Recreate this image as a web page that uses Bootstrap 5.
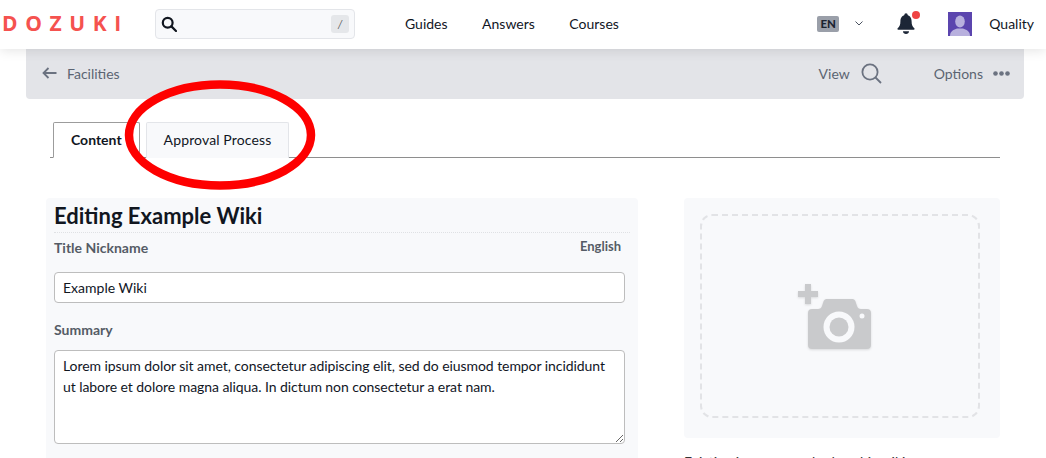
<!DOCTYPE html>
<html lang="en"><head><meta charset="utf-8"><title>Dozuki</title>
<link href="https://cdn.jsdelivr.net/npm/bootstrap@5.3.0/dist/css/bootstrap.min.css" rel="stylesheet">
<style>
html,body{height:458px;overflow:hidden}
body{font-family:Lato,"Liberation Sans",sans-serif;font-size:14px;color:#11161f;background:#fff;position:relative}
.top-bar{height:49px;background:#fff;box-shadow:0 1px 12px rgba(0,0,0,.12);position:relative;z-index:2;padding:0 0 2px 2px}
.brand-word{font-family:"Open Sans","Liberation Sans",sans-serif;font-weight:700;font-size:21px;letter-spacing:7.6px;color:#f5524f;width:153px;line-height:1}
.search-box{width:200px;height:30px;background:#f8f9fb;border:1px solid #e3e5e9;border-radius:4px;padding:0 5px}
.slash-key{width:18px;height:18px;background:#e5e7ea;border-radius:3px;font-size:11px;color:#555;text-align:center;line-height:18px;font-style:italic}
.main-links{margin-left:50px;gap:34.5px;font-size:14px}
.lang-tag{width:22px;height:16px;background:#9a9fa9;border-radius:2px;font-size:11.5px;font-weight:900;color:#1c2430;text-align:center;line-height:16px}
.bell-wrap{position:relative;width:22px;height:24px}
.bell-dot{position:absolute;right:-3px;top:-1px;width:8px;height:8px;border-radius:50%;background:#ef4444}
.person-pic{width:24px;height:24px;display:block}
.sub-bar{margin:0 22px 0 26px;height:50px;background:#e3e4e8;border-radius:0 0 4px 4px;padding:0 14px 2px 16px;color:#5b6472;font-size:14px}
.tab-row{margin:23px 46px 0 50px;height:36px;border-bottom:1px solid #8e8e8e;padding-left:3px;gap:6px}
.tab-on,.tab-off{height:36px;padding:0 17px;line-height:34px;font-size:14px;border-radius:2px 2px 0 0}
.tab-on{font-weight:700;background:#fff;border:1px solid #9c9c9c;border-bottom-color:#fff}
.tab-off{background:#f8f9fb;border:1px solid #e3e5e9;border-bottom:0;letter-spacing:.13px}
.body-wrap{margin:40px 46px 0 46px;gap:46px}
.edit-panel{width:592px;height:270px;background:#f8f9fb;border-radius:4px;padding:0 8px;flex:none}
.edit-title{font-size:22px;font-weight:700;line-height:33px;padding-top:1px;margin:0;border-bottom:1px dotted #dfe1e4}
.field-label{font-weight:700;color:#555c66;font-size:14px}
.lang-name{font-size:13px;margin-top:-1px}
.edit-panel .form-control{border-color:#bdbdbd;border-radius:4px;font-size:14px;color:#11161f;padding:0 8px;box-shadow:none}
.name-input{height:31px;width:571px;margin-top:16px}
.sum-input{height:94px;width:571px;margin-top:12px;padding-top:4px!important;line-height:21px;resize:vertical;letter-spacing:-.065px}
.sum-label{margin-top:18px;line-height:17px}
.title-row{padding:6px 9px 0 0;line-height:17px}
.side-col{width:316px;flex:none}
.drop-panel{height:240px;background:#f8f9fb;border-radius:4px;padding:16px 20px 20px 16px}
.drop-inner{height:100%;border:2px dashed #e2e3e6;border-radius:12px}
.cam-icon{margin-right:11px;filter:drop-shadow(0 1px 1px rgba(0,0,0,.12))}
.side-note{margin-top:15px;font-size:14px;line-height:17px;color:#333}
.ring-mark{position:absolute;left:120px;top:76px;z-index:5;pointer-events:none}
.lang-chev{margin-left:16px}
.bell-wrap{margin-left:32px}
.person-pic{margin-left:31px}
.user-name{margin:0 12px 0 17px}
.back-label{margin-left:10px}
.view-glass{margin-left:11px}
.opt-label{margin-left:52px}
.opt-dots{margin-left:10px}
</style></head><body>
<header class="top-bar d-flex align-items-center">
  <div class="brand-word">DOZUKI</div>
  <div class="search-box d-flex align-items-center justify-content-between">
    <svg width="16" height="16" viewBox="0 0 16 16" fill="none" stroke="#11161f" stroke-width="2.2"><circle cx="6.7" cy="6.7" r="4.9"/><path d="M10.4 10.4 15 15" stroke-linecap="round"/></svg>
    <span class="slash-key">/</span>
  </div>
  <nav class="main-links d-flex"><span>Guides</span><span>Answers</span><span>Courses</span></nav>
  <div class="d-flex align-items-center ms-auto">
    <span class="lang-tag">EN</span>
    <svg class="lang-chev" width="8" height="5" viewBox="0 0 8 5" fill="none" stroke="#4a5260" stroke-width="1"><path d="M.5.500l3.500 3.500 3.500-3.500"/></svg>
    <div class="bell-wrap">
      <svg width="22" height="24" viewBox="0 0 22 24" fill="#1c2636"><path d="M11 3c-3.600 0-5.600 2.700-5.600 6.300 0 3.600-.9 5.400-2.700 7-.6.600-.3 1.500.6 1.500h15.400c.9 0 1.200-.9.600-1.500-1.800-1.600-2.700-3.400-2.700-7C16.600 5.700 14.600 3 11 3z"/><circle cx="11" cy="3" r="1.700"/><path d="M8 19.300h6c0 1.700-1.300 2.700-3 2.700s-3-1-3-2.700z"/></svg>
      <span class="bell-dot"></span>
    </div>
    <svg class="person-pic" viewBox="0 0 24 24"><rect width="24" height="24" fill="#5b45ae"/><ellipse cx="12" cy="9.500" rx="4.800" ry="6" fill="#b8b0de"/><path d="M2 24c0-5 4-6.500 7-7.500h6c3 1 7 2.500 7 7.500z" fill="#b8b0de"/></svg>
    <span class="user-name">Quality</span>
  </div>
</header>
<div class="sub-bar d-flex align-items-center">
  <svg width="15" height="12" viewBox="0 0 15 12" fill="none" stroke="#6b7280" stroke-width="1.800"><path d="M14.500 6H1.500M6.500 1l-5 5 5 5"/></svg>
  <span class="back-label">Facilities</span>
  <span class="ms-auto">View</span>
  <svg class="view-glass" width="21" height="21" viewBox="0 0 21 21" fill="none" stroke="#6b7280" stroke-width="1.800"><circle cx="9" cy="9" r="7.600"/><path d="M14.500 14.500l5.500 5.500"/></svg>
  <span class="opt-label">Options</span>
  <svg class="opt-dots" width="17" height="5" viewBox="0 0 17 5" fill="#6b7280"><circle cx="2.500" cy="2.500" r="2.300"/><circle cx="8.500" cy="2.500" r="2.300"/><circle cx="14.500" cy="2.500" r="2.300"/></svg>
</div>
<div class="tab-row d-flex">
  <div class="tab-on">Content</div>
  <div class="tab-off">Approval Process</div>
</div>
<main class="body-wrap d-flex">
  <section class="edit-panel">
    <h1 class="edit-title">Editing Example Wiki</h1>
    <div class="d-flex justify-content-between field-label title-row"><span>Title Nickname</span><span class="lang-name">English</span></div>
    <input class="form-control name-input" value="Example Wiki">
    <div class="field-label sum-label">Summary</div>
    <textarea class="form-control sum-input">Lorem ipsum dolor sit amet, consectetur adipiscing elit, sed do eiusmod tempor incididunt ut labore et dolore magna aliqua. In dictum non consectetur a erat nam.</textarea>
  </section>
  <aside class="side-col">
    <div class="drop-panel"><div class="drop-inner d-flex align-items-center justify-content-center">
      <svg class="cam-icon" width="73" height="65" viewBox="0 0 73 65"><path d="M7 0h6v7h7v6h-7v7H7v-7H0V7h7z" fill="#c9cacc"/><path d="M10 29a4 4 0 0 1 4-4h6c2 0 3.500-1 4-3l1.500-4.500C26 16 27 15 28.500 15h26c1.500 0 2.500 1 3 2.500L59 22c.5 2 2 3 4 3h6a4 4 0 0 1 4 4v32a4 4 0 0 1-4 4H14a4 4 0 0 1-4-4z" fill="#c9cacc"/><circle cx="41" cy="43" r="15.500" fill="#f8f9fb"/><circle cx="41" cy="43" r="9.500" fill="#c9cacc"/><circle cx="64" cy="32" r="2.500" fill="#f8f9fb"/></svg>
    </div></div>
    <p class="side-note">Existing images attached to this wiki</p>
  </aside>
</main>
<svg class="ring-mark" width="200" height="118" viewBox="0 0 200 118" fill="none"><ellipse cx="100" cy="59" rx="91" ry="50.500" stroke="#fe0000" stroke-width="8.500"/></svg>
</body></html>
